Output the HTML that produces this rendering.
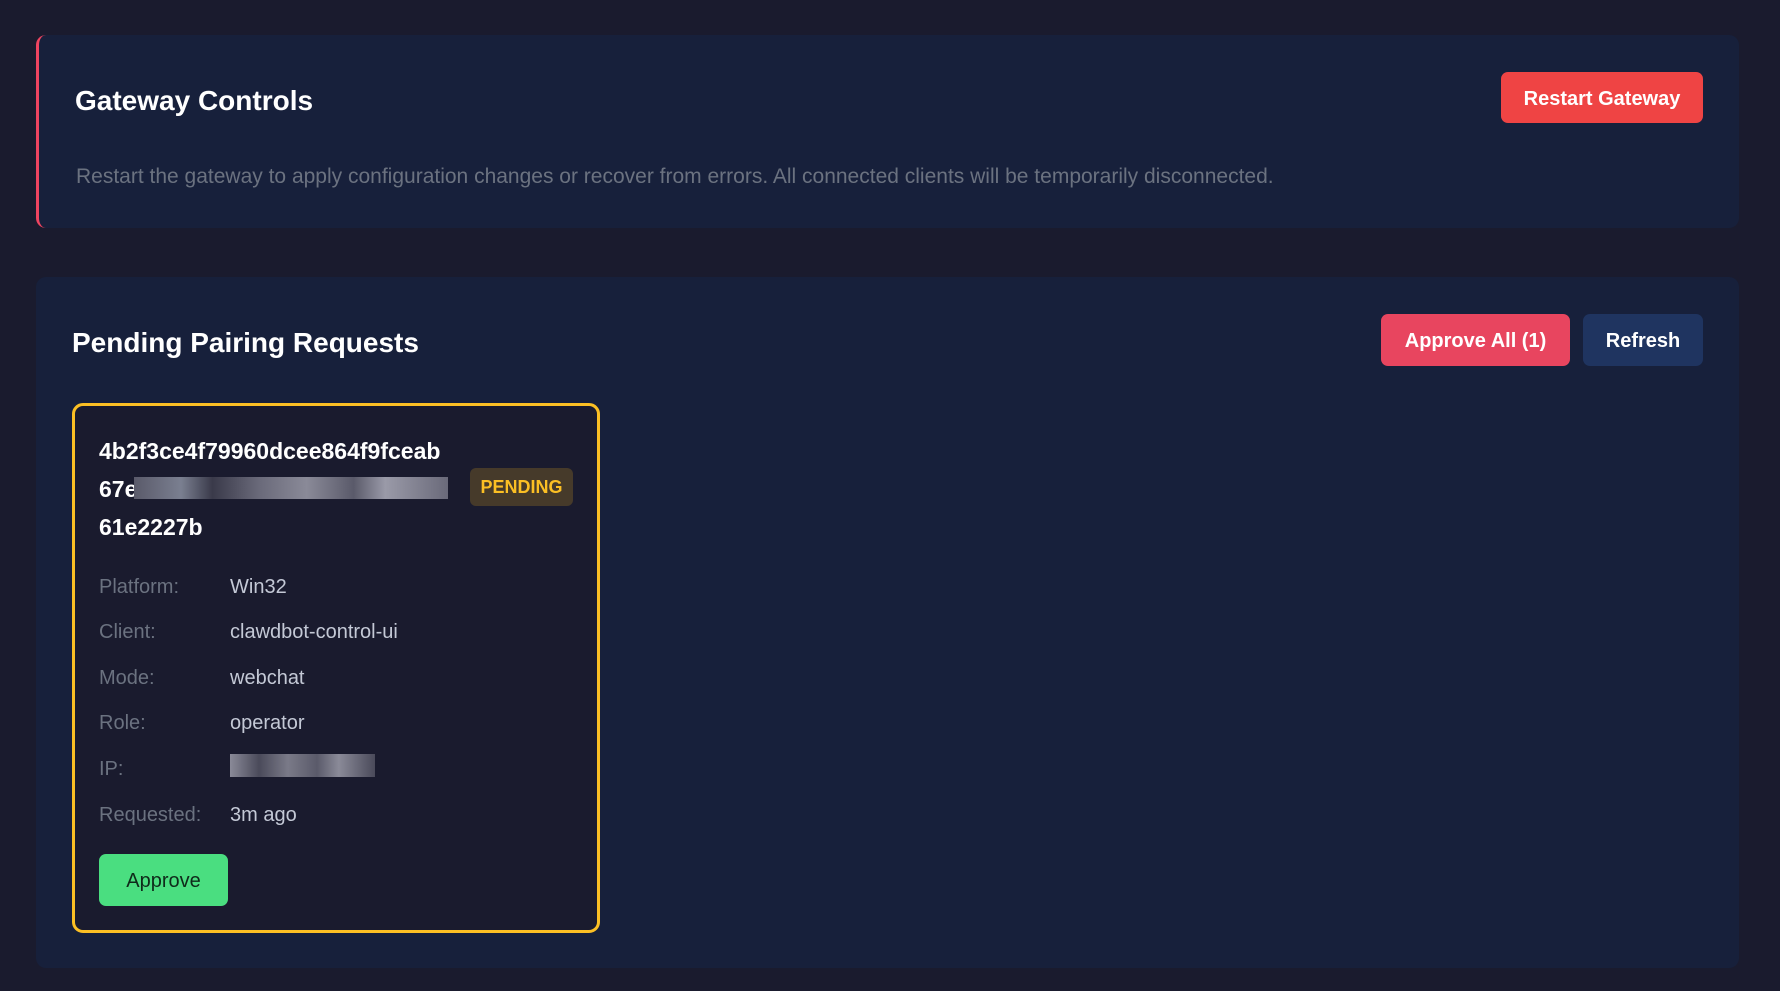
<!DOCTYPE html>
<html><head><style>
*{margin:0;padding:0;box-sizing:border-box}
body{width:1780px;height:991px;background:#1a1b2e;font-family:"Liberation Sans",sans-serif;position:relative;overflow:hidden}
.abs{position:absolute}
.card{background:#17203b;border-radius:10px}
.btn{position:absolute;border-radius:7px;color:#fff;font-weight:bold;font-size:20px;display:flex;align-items:center;justify-content:center;padding-top:3px}
.lbl{position:absolute;left:99px;color:#6b7280;font-size:20px}
.val{position:absolute;left:230px;color:#c4c9d6;font-size:20px}
</style></head><body>
<div class="abs card" style="left:36px;top:35px;width:1703px;height:193px;border-left:3px solid #ef4460"></div>
<div class="abs" style="left:75px;top:85px;color:#fff;font-size:28px;font-weight:bold">Gateway Controls</div>
<div class="btn" style="left:1501px;top:72px;width:202px;height:51px;background:#ef4444">Restart Gateway</div>
<div class="abs" style="left:76px;top:165px;color:#6b7280;font-size:21px">Restart the gateway to apply configuration changes or recover from errors. All connected clients will be temporarily disconnected.</div>

<div class="abs card" style="left:36px;top:277px;width:1703px;height:691px"></div>
<div class="abs" style="left:72px;top:327px;color:#fff;font-size:28px;font-weight:bold">Pending Pairing Requests</div>
<div class="btn" style="left:1381px;top:314px;width:189px;height:52px;background:#e8455f">Approve All (1)</div>
<div class="btn" style="left:1583px;top:314px;width:120px;height:52px;background:#1f3460">Refresh</div>

<div class="abs" style="left:72px;top:403px;width:528px;height:530px;border:3px solid #fbbf24;border-radius:11px;background:#1a1b2e"></div>
<div class="abs" style="left:99px;top:432px;color:#fff;font-size:23px;font-weight:bold;line-height:38px">4b2f3ce4f79960dcee864f9fceab<br>67e<br>61e2227b</div>
<div class="abs" style="left:134px;top:477px;width:314px;height:22px;background:linear-gradient(90deg,#5a5a6a,#7a7f90 15%,#3a3a4a 25%,#6a6a7a 40%,#8a8a98 55%,#5a5a6a 70%,#9a9aa8 80%,#6a6a7a)"></div>
<div class="abs" style="left:470px;top:468px;width:103px;height:38px;background:#463a2a;border-radius:6px;color:#fbbf24;font-size:18px;font-weight:bold;display:flex;align-items:center;justify-content:center">PENDING</div>

<div class="lbl" style="top:576px">Platform:</div><div class="val" style="top:576px">Win32</div>
<div class="lbl" style="top:621px">Client:</div><div class="val" style="top:621px">clawdbot-control-ui</div>
<div class="lbl" style="top:667px">Mode:</div><div class="val" style="top:667px">webchat</div>
<div class="lbl" style="top:712px">Role:</div><div class="val" style="top:712px">operator</div>
<div class="lbl" style="top:758px">IP:</div>
<div class="abs" style="left:230px;top:754px;width:145px;height:23px;background:linear-gradient(90deg,#8a8a98,#4a4a5a 20%,#7a7a88 40%,#5a5a6a 60%,#8a8a98 75%,#4a4a5a)"></div>
<div class="lbl" style="top:804px">Requested:</div><div class="val" style="top:804px">3m ago</div>
<div class="btn" style="left:99px;top:854px;width:129px;height:52px;background:#4ade80;color:#0f2a1a;font-weight:normal">Approve</div>
</body></html>
